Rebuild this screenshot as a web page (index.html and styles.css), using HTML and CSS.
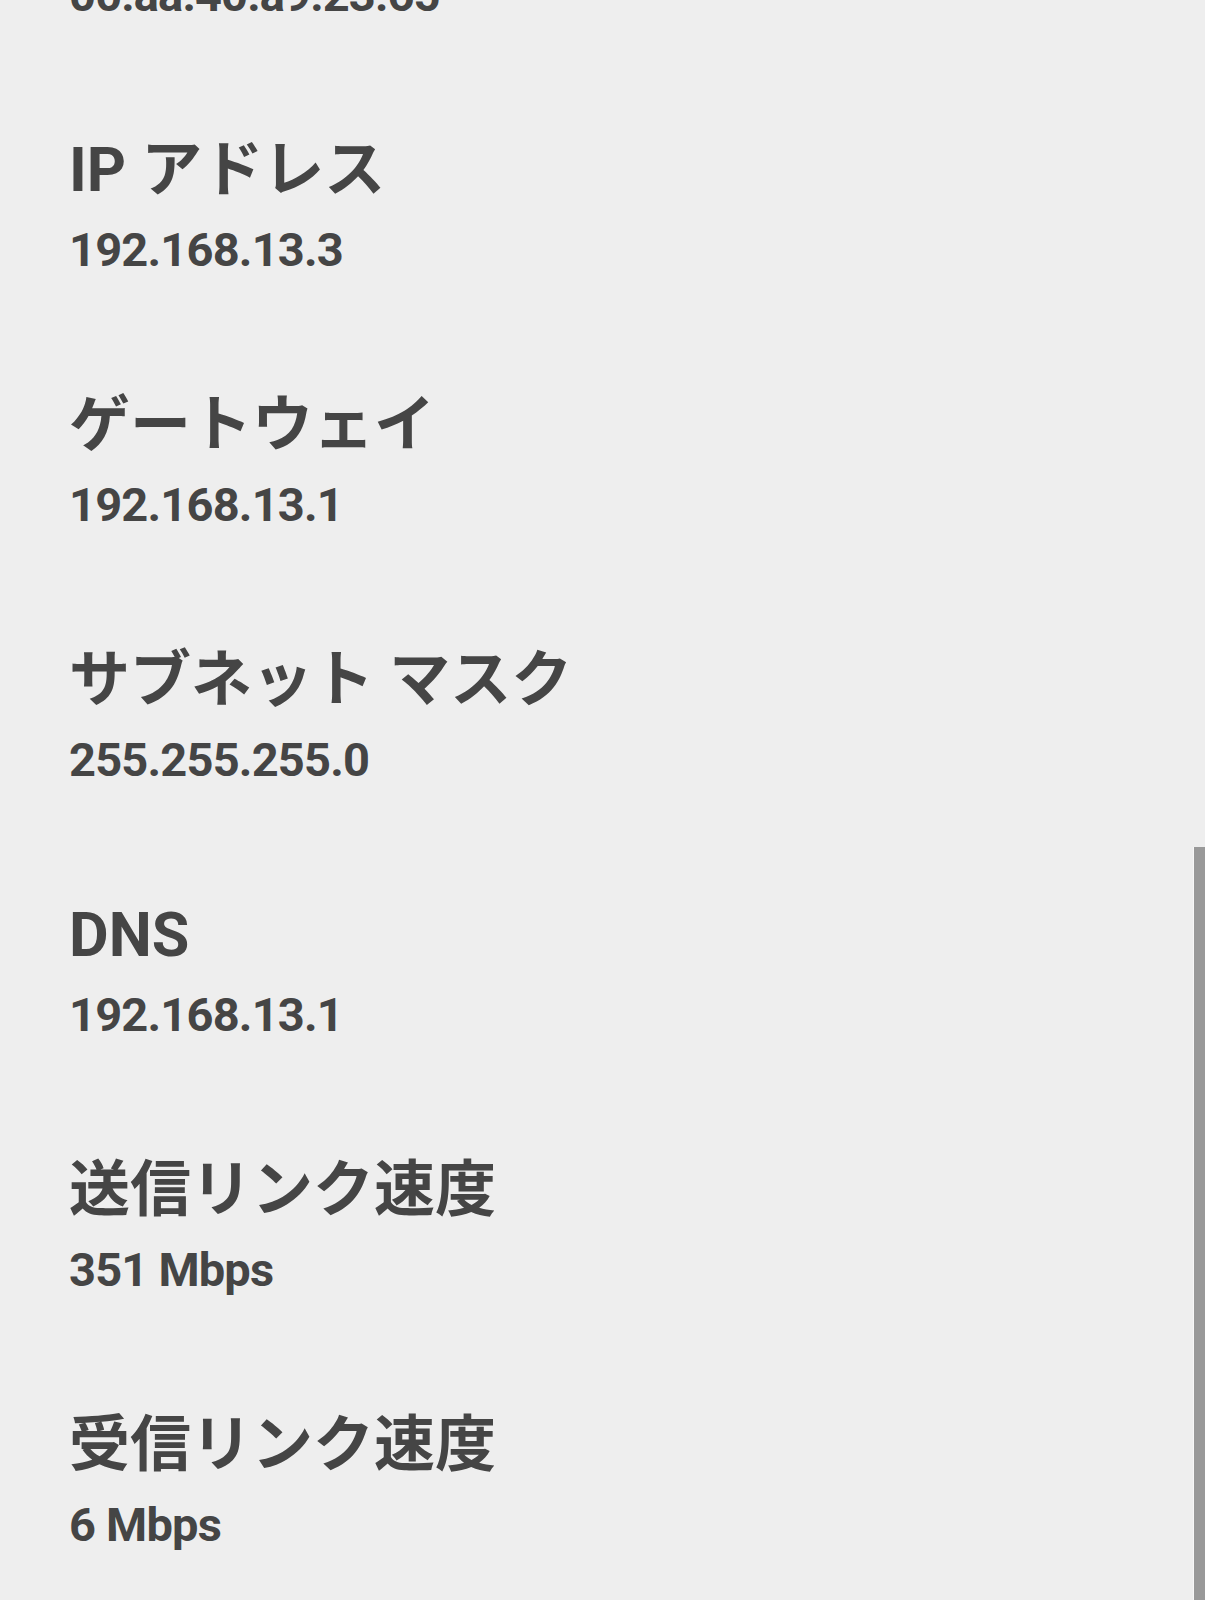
FILE: index.html
```html
<!DOCTYPE html>
<html lang="ja">
<head>
<meta charset="utf-8">
<title>ネットワークの詳細</title>
<link rel="stylesheet" href="styles.css">
</head>
<body>
<main class="details">
  <div class="item">
    <div class="label">MAC アドレス</div>
    <div class="value">00:aa:40:a9:23:65</div>
  </div>
  <div class="item">
    <div class="label">IP アドレス</div>
    <div class="value">192.168.13.3</div>
  </div>
  <div class="item">
    <div class="label">ゲートウェイ</div>
    <div class="value">192.168.13.1</div>
  </div>
  <div class="item">
    <div class="label">サブネット マスク</div>
    <div class="value">255.255.255.0</div>
  </div>
  <div class="item">
    <div class="label">DNS</div>
    <div class="value">192.168.13.1</div>
  </div>
  <div class="item">
    <div class="label">送信リンク速度</div>
    <div class="value">351 Mbps</div>
  </div>
  <div class="item">
    <div class="label">受信リンク速度</div>
    <div class="value">6 Mbps</div>
  </div>
</main>
<div class="scrollbar"></div>
</body>
</html>
```
FILE: styles.css
```css
html, body {
  margin: 0;
  padding: 0;
  background: #eeeeee;
  height: 100%;
  overflow: hidden;
}
body {
  font-family: Roboto, "Noto Sans CJK JP", sans-serif;
  color: #454545;
}
.details {
  display: flex;
  flex-direction: column;
  gap: 107px;
  margin-top: -125px;
  padding-left: 69px;
}
.item {
  display: flex;
  flex-direction: column;
  gap: 12px;
}
.label {
  font-size: 61px;
  line-height: 80px;
  font-weight: 700;
  white-space: nowrap;
}
.value {
  font-size: 47px;
  line-height: 56px;
  font-weight: 700;
  letter-spacing: -0.8px;
  white-space: nowrap;
}
.scrollbar {
  position: fixed;
  right: 0;
  top: 847px;
  bottom: 0;
  width: 11px;
  background: #999999;
  border-left: 1px solid #f7f7f7;
}
```
